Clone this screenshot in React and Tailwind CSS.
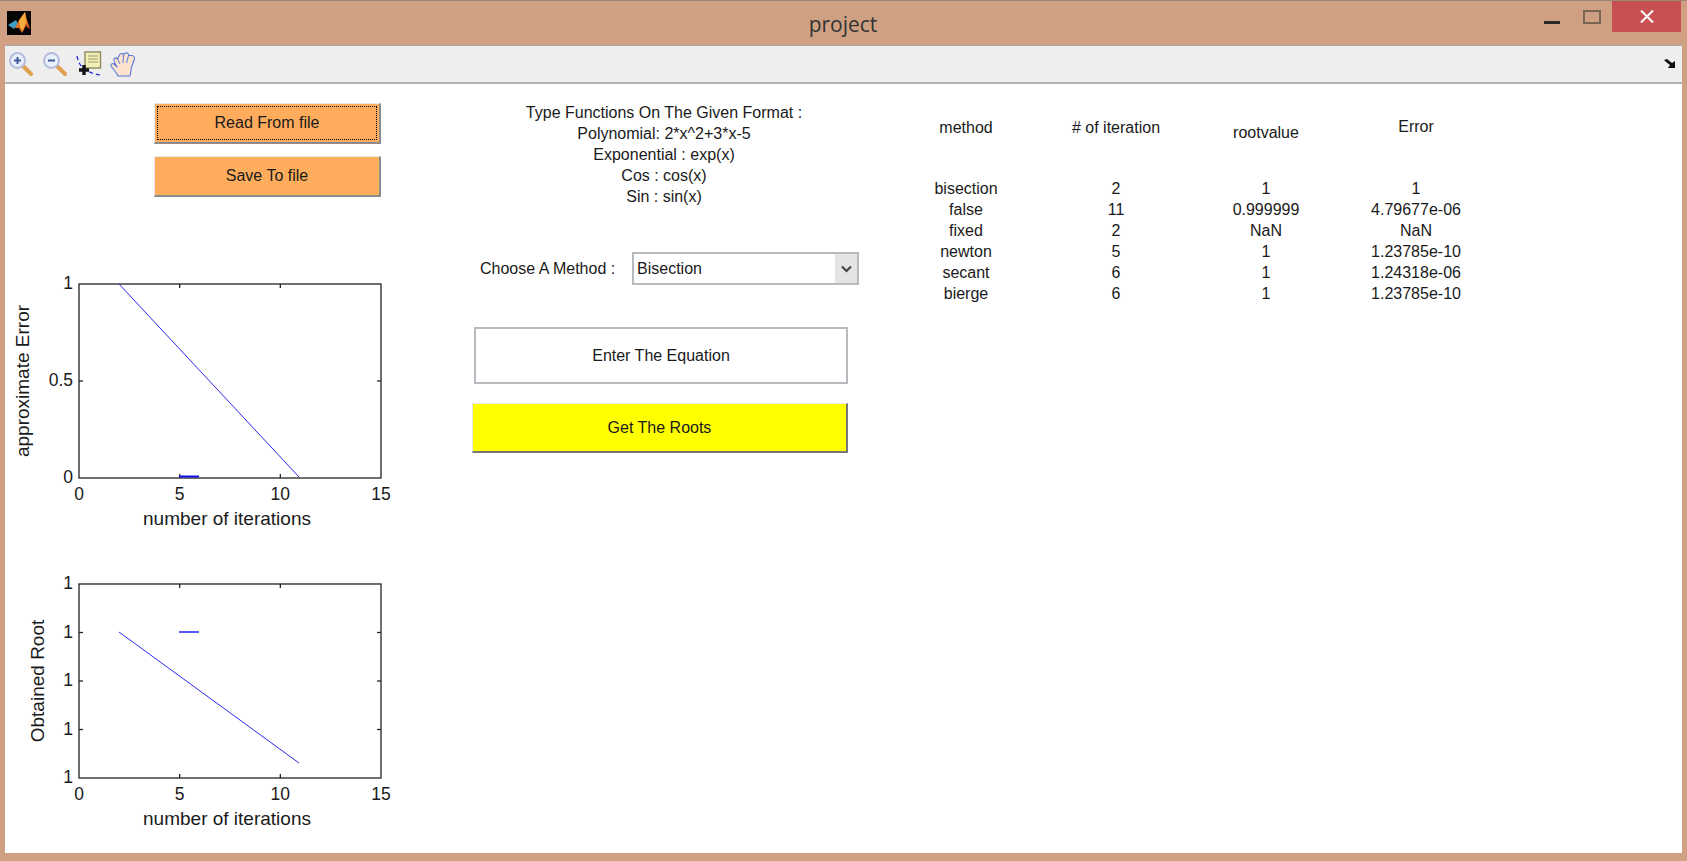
import React from 'react'

const FRAME = 'font-["Liberation_Sans",Arial,sans-serif]'

// Icono de MATLAB de la barra de título
const MatlabLogo = () => (
  <svg width="24" height="24" viewBox="0 0 24 24" className="shrink-0">
    <rect width="24" height="24" fill="#050505" />
    <path d="M1 14 L9 9 L11 13 L7 18 L4 16 Z" fill="#3f9fc4" />
    <path d="M8 17 L12 9 L18 1 L20 9 L23 18 L19 15 L15 22 L12 17 Z" fill="#e0702a" />
    <path d="M12 10 L18 1 L19 11 L16 20 L13 16 Z" fill="#f4ad3c" />
    <path d="M19 13 L23 18 L19 15 L15 22 Z" fill="#a8381a" />
  </svg>
)

const Magnifier = ({ minus }) => (
  <svg width="26" height="26" viewBox="0 0 26 26">
    <path d="M15 15 L23 23" stroke="#e0a050" strokeWidth="4" strokeLinecap="round" />
    <circle cx="9.5" cy="9.5" r="7.5" fill="#e8eefa" stroke="#b4bedc" strokeWidth="2" />
    <path d="M6 9.5 H13" stroke="#3c5a96" strokeWidth="2" />
    {!minus && <path d="M9.5 6 V13" stroke="#3c5a96" strokeWidth="2" />}
  </svg>
)

const DataCursor = () => (
  <svg width="26" height="26" viewBox="0 0 26 26">
    <path d="M1 5 C3 15 8 21 24 24" fill="none" stroke="#2a2ae8" strokeWidth="1.3" strokeDasharray="4 3" />
    <rect x="9" y="1" width="15.5" height="16" fill="#f2f0b4" stroke="#8a8a60" strokeWidth="1.4" />
    <path d="M12 5 H22 M12 8 H22 M12 11 H22" stroke="#9a9a70" />
    <path d="M8 14 V24 M3 19 H13" stroke="#151515" strokeWidth="3.4" />
  </svg>
)

const HandTool = () => (
  <svg width="26" height="26" viewBox="0 0 26 26">
    <path
      d="M8 25 C6 21 3 18 1 15 C0.5 13 2.5 12 4 13 L7 16 C5.5 13 3.5 10 4 8 C4.5 6.5 6.5 6.5 7.5 8 L9.5 4 C10.3 2 13 2 13.5 3.5 L15.5 2 C17.5 1.5 19 2.8 18.5 4.5 L21.5 4.5 C23.5 4.5 25 6 24.5 8 L21.5 16 C21 20 20.5 22 20 25 Z"
      fill="#fbe3cf"
      stroke="#5a78d8"
      strokeWidth="1.1"
      strokeLinejoin="round"
    />
    <path d="M7.5 8 L10 13 M13.5 3.5 L13 12 M18.5 4.5 L16.5 12" fill="none" stroke="#5a78d8" strokeWidth="1" />
  </svg>
)

// Gráfica estilo MATLAB: los ejes y los datos se dibujan en SVG
const Plot = ({ yLabel, yLabelX, yTicks, line, stub }) => {
  const x0 = 5
  const w = 302
  const h = 194
  const y0 = 5
  const xs = [0, 5, 10, 15]
  const toX = (v) => x0 + (v / 15) * w
  return (
    <svg width="400" height="266" viewBox="-69 -10 400 266" className="block shrink-0">
      <g fill="#1a1a1a" fontFamily="Liberation Sans, Arial, sans-serif" fontSize="17.5">
        <rect x={x0} y={y0} width={w} height={h} fill="#fff" stroke="#222" strokeWidth="1.3" />
        {xs.slice(1, 3).map((v) => (
          <g key={v} stroke="#222" strokeWidth="1.3">
            <path d={`M${toX(v)} ${y0 + h} v-4`} />
            <path d={`M${toX(v)} ${y0} v4`} />
          </g>
        ))}
        {yTicks.map((t) => {
          const y = y0 + h * t.at
          return (
            <g key={t.at}>
              {t.at > 0 && t.at < 1 && (
                <g stroke="#222" strokeWidth="1.3">
                  <path d={`M${x0} ${y} h4`} />
                  <path d={`M${x0 + w} ${y} h-4`} />
                </g>
              )}
              <text x={x0 - 6} y={y + 5} textAnchor="end">{t.label}</text>
            </g>
          )
        })}
        {xs.map((v) => (
          <text key={v} x={toX(v)} y={y0 + h + 22} textAnchor="middle">{v}</text>
        ))}
        <text x={153} y={y0 + h + 47} fontSize="19" textAnchor="middle">number of iterations</text>
        <text transform={`translate(${yLabelX} ${y0 + h / 2}) rotate(-90)`} fontSize="19" textAnchor="middle">{yLabel}</text>
      </g>
      <path d={line} fill="none" stroke="#2a2af0" strokeWidth="1" />
      <path d={stub.d} fill="none" stroke="#1010e8" strokeWidth={stub.width} />
    </svg>
  )
}

const OrangeButton = ({ children, focused }) => (
  <button className="relative flex h-[41px] w-[227px] items-center justify-center border border-t-[#e8e8e8] border-l-[#e8e8e8] border-r-[2px] border-b-[2px] border-r-[#8c8c8c] border-b-[#8c8c8c] bg-[#ffad5c] text-[16px] text-[#1a1a1a]">
    {focused && <span className="absolute inset-[2px] border border-dotted border-black" />}
    {children}
  </button>
)

const ROWS = [
  ['bisection', '2', '1', '1'],
  ['false', '11', '0.999999', '4.79677e-06'],
  ['fixed', '2', 'NaN', 'NaN'],
  ['newton', '5', '1', '1.23785e-10'],
  ['secant', '6', '1', '1.24318e-06'],
  ['bierge', '6', '1', '1.23785e-10'],
]

const FORMAT_LINES = [
  'Type Functions On The Given Format :',
  'Polynomial: 2*x^2+3*x-5',
  'Exponential : exp(x)',
  'Cos : cos(x)',
  'Sin : sin(x)',
]

export default function App() {
  return (
    <div className={`${FRAME} flex h-[861px] w-[1687px] flex-col overflow-hidden border-t border-t-[#9c8774] bg-[#cfa182] text-[#1a1a1a]`}>
      {/* Barra de título */}
      <div className="grid h-[44px] shrink-0 grid-cols-[1fr_auto_1fr] items-center pl-[7px]">
        <MatlabLogo />
        <span className="pr-[8px] pt-[3px] font-['Open_Sans',sans-serif] text-[21px] text-[#333]">project</span>
        <div className="flex items-start justify-end self-start pr-[6px]">
          <span className="mr-[23px] mt-[20px] h-[3px] w-[16px] bg-[#2a2a2a]" />
          <span className="mr-[11px] mt-[9px] h-[14px] w-[18px] border-[2px] border-[#7d6555]" />
          <span className="flex h-[31px] w-[69px] items-center justify-center bg-[#c95052]">
            <svg width="14" height="13" viewBox="0 0 14 13">
              <path d="M1 0.5 L13 12.5 M13 0.5 L1 12.5" stroke="#fff" strokeWidth="2" />
            </svg>
          </span>
        </div>
      </div>

      <div className="mx-[5px] mb-[8px] flex flex-1 flex-col border-t border-t-[#a8a8a8] bg-white">
        {/* Barra de herramientas */}
        <div className="flex h-[38px] shrink-0 items-center justify-between border-b-[2px] border-b-[#b4b4b4] bg-[#eeeeee] pl-[3px] pr-[6px]">
          <div className="flex items-center gap-[8px]">
            <Magnifier />
            <Magnifier minus />
            <DataCursor />
            <HandTool />
          </div>
          <svg width="12" height="10" viewBox="0 0 12 10">
            <path d="M0 1 L3 0 L8 4 L11 2 L11 9 L4 9 L6 6 L2 3 Z" fill="#111" />
          </svg>
        </div>

        {/* Contenido de la figura */}
        <div className="flex flex-1">
          <div className="flex w-[467px] shrink-0 flex-col">
            <div className="ml-[149px] mt-[19px] flex flex-col gap-[12px]">
              <OrangeButton focused>Read From file</OrangeButton>
              <OrangeButton>Save To file</OrangeButton>
            </div>
            <div className="mt-[72px] flex flex-col gap-[34px]">
              <Plot
                yLabel="approximate Error"
                yLabelX={-45}
                yTicks={[
                  { at: 0, label: '1' },
                  { at: 0.5, label: '0.5' },
                  { at: 1, label: '0' },
                ]}
                line="M45 5 L225 198"
                stub={{ d: 'M105 197.5 H125', width: 2 }}
              />
              <Plot
                yLabel="Obtained Root"
                yLabelX={-30}
                yTicks={[
                  { at: 0, label: '1' },
                  { at: 0.25, label: '1' },
                  { at: 0.5, label: '1' },
                  { at: 0.75, label: '1' },
                  { at: 1, label: '1' },
                ]}
                line="M45 53 L225 184"
                stub={{ d: 'M105 53 H125', width: 1.4 }}
              />
            </div>
          </div>

          <div className="flex w-[393px] shrink-0 flex-col text-[16px]">
            <div className="ml-[4px] mt-[18px] flex w-[376px] flex-col text-center leading-[21px]">
              {FORMAT_LINES.map((line) => (
                <span key={line}>{line}</span>
              ))}
            </div>
            <div className="mt-[45px] flex h-[33px] items-center">
              <span className="ml-[8px] w-[152px] whitespace-nowrap">Choose A Method :</span>
              <div className="flex h-[33px] w-[227px] items-stretch border-[2px] border-[#b9b9c0] bg-white pl-[3px]">
                <span className="flex-1 self-center pt-[1px]">Bisection</span>
                <span className="flex w-[22px] items-center justify-center bg-[#e4e4e4]">
                  <svg width="11" height="8" viewBox="0 0 11 8">
                    <path d="M1 1.5 L5.5 6 L10 1.5" fill="none" stroke="#444" strokeWidth="2.2" />
                  </svg>
                </span>
              </div>
            </div>
            <div className="ml-[2px] mt-[42px] flex h-[57px] w-[374px] items-center justify-center border-[2px] border-[#b9b9c0] bg-white pt-[1px]">
              Enter The Equation
            </div>
            <button className="mt-[19px] flex h-[50px] w-[376px] items-center justify-center border border-t-[#e8e8e8] border-l-[#e8e8e8] border-r-[2px] border-b-[2px] border-r-[#777] border-b-[#777] bg-[#ffff00]">
              Get The Roots
            </button>
          </div>

          {/* Tabla de resultados */}
          <div className="ml-[26px] mt-[31px] text-[16px]">
            <div className="grid h-[63px] grid-cols-[150px_150px_150px_150px]">
              <span className="pt-[1px] text-center">method</span>
              <span className="pt-[1px] text-center"># of iteration</span>
              <span className="pt-[6px] text-center">rootvalue</span>
              <span className="text-center">Error</span>
            </div>
            <div className="grid grid-cols-[150px_150px_150px_150px] leading-[21px]">
              {ROWS.flat().map((cell, i) => (
                <span key={i} className="text-center">{cell}</span>
              ))}
            </div>
          </div>
        </div>
      </div>
    </div>
  )
}
